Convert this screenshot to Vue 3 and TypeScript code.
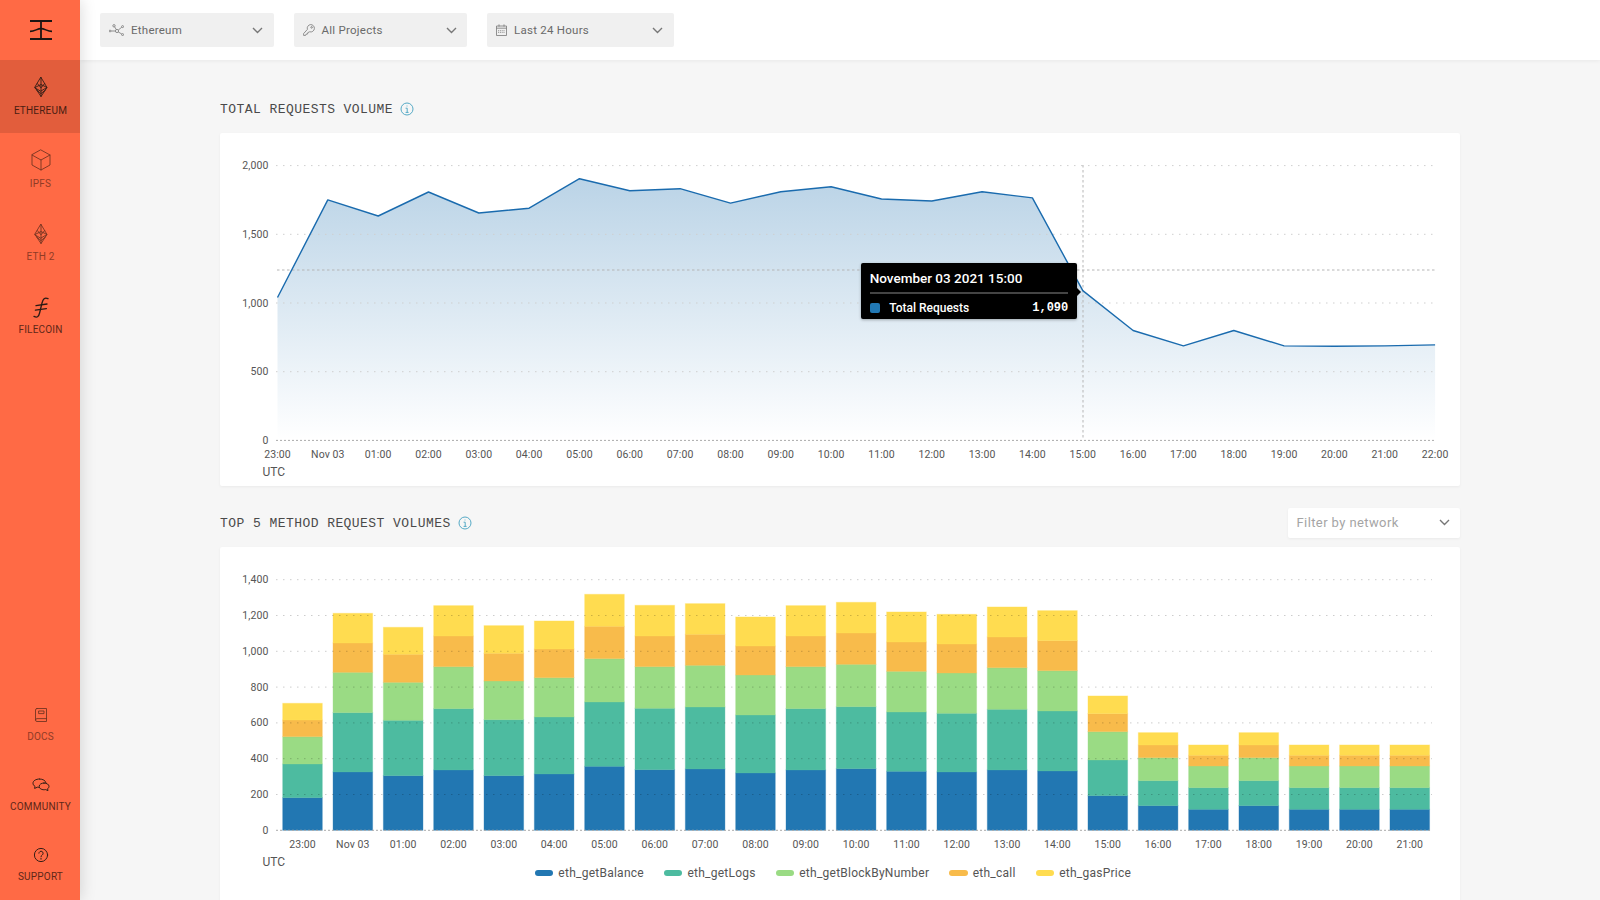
<script setup lang="ts">
const ethPaths = [
  'M12 2.5 L18 12.5 L12 21.5 L6 12.5 Z',
  'M6 12.5 L12 9.5 L18 12.5 L12 16 Z',
  'M12 2.5 V21.5',
  'M8.4 8.6 L12 12.8 L15.6 8.6',
  'M7.6 15 L12 18.6 L16.4 15',
]

interface NavItem { label: string; paths: string[]; wide?: boolean; active?: boolean; tone?: string }

const topNav: NavItem[] = [
  { label: 'Ethereum', paths: ethPaths, active: true, wide: false },
  { label: 'IPFS', paths: ['M12 2 L21 7 V17 L12 22 L3 17 V7 Z', 'M3 7 L12 12 L21 7', 'M12 12 V22'], tone: 'soft' },
  { label: 'ETH 2', paths: ethPaths, tone: 'soft' },
  { label: 'Filecoin', paths: ['M19 3.6 C15.6 2 14 4 13 8 L10.6 18 C9.6 22 8 23 5 21.4', 'M7 10.6 L18 9', 'M6.4 15.2 L17.4 13.6'], wide: true },
]

const bottomNav: NavItem[] = [
  { label: 'Docs', paths: ['M8 5.5 H17.5 V18.5 H8 A1.5 1.5 0 0 1 6.5 17 V7 A1.5 1.5 0 0 1 8 5.5 Z', 'M6.5 16.8 A1.5 1.5 0 0 1 8 15.6 H17.5', 'M10 8 H15 V10.6 H10 Z'], tone: 'soft' },
  { label: 'Community', paths: ['M10.5 6 C6.5 6 4 8 4 10.2 C4 11.6 4.8 12.6 6 13.4 L5.6 15.4 L8.4 14.2 C9 14.3 9.6 14.4 10.2 14.4', 'M10.5 6 C14 6 16.6 7.6 17 9.8', 'M15 10 C18 10 20 11.6 20 13.4 C20 14.4 19.4 15.2 18.6 15.8 L19 17.6 L16.6 16.6 C13.2 17.2 10.2 15.8 10.2 13.4 C10.2 11.4 12.4 10 15 10 Z'] },
  { label: 'Support', paths: ['M18.6 12 A6.6 6.6 0 1 1 5.4 12 A6.6 6.6 0 1 1 18.6 12 Z', 'M9.9 10.2 A2.1 2.1 0 1 1 13.2 12 C12.4 12.5 12 13 12 13.8', 'M12 15.4 V16.2'] },
]

const lineValues = [1040, 1750, 1633, 1808, 1655, 1690, 1905, 1817, 1832, 1727, 1810, 1846, 1757, 1742, 1810, 1765, 1090, 800, 688, 800, 688, 685, 688, 695]
const hours = ['23:00', 'Nov 03', '01:00', '02:00', '03:00', '04:00', '05:00', '06:00', '07:00', '08:00', '09:00', '10:00', '11:00', '12:00', '13:00', '14:00', '15:00', '16:00', '17:00', '18:00', '19:00', '20:00', '21:00', '22:00']

const lineX = (i: number) => 277.5 + i * 50.33
const lineY = (v: number) => 440.4 - v * 0.1374
const linePts = lineValues.map((v, i) => `${lineX(i).toFixed(1)},${lineY(v).toFixed(1)}`)
const linePath = 'M' + linePts.join(' L')
const areaPath = `${linePath} L${lineX(23)},440.4 L277.5,440.4 Z`
const lineTicks = [0, 500, 1000, 1500, 2000].map((v) => ({ y: lineY(v), label: v.toLocaleString('en-US') }))

const series = [
  { name: 'eth_getBalance', color: '#2277B2' },
  { name: 'eth_getLogs', color: '#4DBBA0' },
  { name: 'eth_getBlockByNumber', color: '#9ADB84' },
  { name: 'eth_call', color: '#F8BB4B' },
  { name: 'eth_gasPrice', color: '#FFDC50' },
]

// cumulative stack tops per hour, in thirds of a pixel above the axis
const low = [63, 128, 193, 225, 256]
const mid = [74, 149, 218, 256, 293]
const stacks = [
  [98, 199, 281, 331, 381], [175, 353, 474, 562, 651], [164, 330, 444, 528, 609], [181, 365, 491, 583, 674],
  [164, 332, 448, 531, 614], [169, 340, 458, 544, 628], [192, 385, 515, 612, 708], [182, 366, 491, 583, 675],
  [184, 370, 495, 588, 680], [172, 346, 466, 553, 640], [181, 365, 491, 583, 674], [185, 371, 498, 592, 684],
  [177, 355, 477, 565, 655], [175, 351, 472, 559, 648], [181, 363, 488, 580, 670], [178, 358, 479, 569, 659],
  [104, 211, 296, 350, 403], mid, low, mid, low, low, low,
]
const barBase = 830.3
const barWidth = 39.6
const barX = (i: number) => 282.7 + i * 50.33
const bars = stacks.flatMap((stack, i) =>
  stack.map((top, s) => {
    const prev = s === 0 ? 0 : stack[s - 1]
    return { key: `${i}-${s}`, x: barX(i), y: barBase - top / 3, h: (top - prev) / 3, color: series[s].color }
  }),
)
const barTicks = [0, 200, 400, 600, 800, 1000, 1200, 1400].map((v) => ({ y: barBase - (v / 200) * 35.8, label: v.toLocaleString('en-US') }))
</script>

<template>
  <div class="app">
    <aside class="sidebar">
      <div class="logo">
        <svg width="24" height="22" viewBox="0 0 24 22" class="logo-mark">
          <path d="M1 2 H23 M1 20 H23" stroke-width="2" />
          <path d="M1 12.4 C6 12.4 8 9.6 12 9.6 C16 9.6 18 12.4 23 12.4" stroke-width="1.6" />
          <path d="M12 2 V20" stroke-width="1.8" />
        </svg>
      </div>
      <nav class="nav">
        <a v-for="item in topNav" :key="item.label" class="nav-item" :class="{ active: item.active, soft: item.tone === 'soft' }">
          <svg width="24" height="24" viewBox="0 0 24 24" class="nav-icon" :class="{ thin: item.paths === ethPaths, bold: item.wide }">
            <path v-for="d in item.paths" :key="d" :d="d" />
          </svg>
          <span>{{ item.label }}</span>
        </a>
      </nav>
      <nav class="nav nav-bottom">
        <a v-for="item in bottomNav" :key="item.label" class="nav-item small" :class="{ soft: item.tone === 'soft' }">
          <svg width="24" height="24" viewBox="0 0 24 24" class="nav-icon">
            <path v-for="d in item.paths" :key="d" :d="d" />
          </svg>
          <span>{{ item.label }}</span>
        </a>
      </nav>
    </aside>

    <div class="main">
      <header class="topbar">
        <div class="select w173">
          <svg class="sel-icon" width="15" height="12" viewBox="0 0 15 12">
            <circle cx="1" cy="7" r="0.9" /><circle cx="5" cy="1.8" r="1.2" /><circle cx="8" cy="7" r="1.6" /><circle cx="13.6" cy="2.6" r="1" /><circle cx="13.6" cy="10.6" r="1" />
            <path d="M2 7 H6.4 M5.6 2.8 L7.3 5.6 M9.3 6 L12.8 3.2 M9.3 8 L12.8 10" />
          </svg>
          <span>Ethereum</span>
          <svg class="chev" width="11" height="7" viewBox="0 0 11 7"><path d="M1 1 L5.5 5.5 L10 1" /></svg>
        </div>
        <div class="select w173">
          <svg class="sel-icon key" width="12" height="12" viewBox="0 0 12 12">
            <path d="M7.6 0.6 A3.7 3.7 0 0 1 11.4 4.4 A3.7 3.7 0 0 1 6.6 7.8 L4.8 8.6 L4.6 10 L3 10.2 L2.6 11.4 L0.6 11.4 L0.6 9.6 L4.4 5.4 A3.7 3.7 0 0 1 7.6 0.6 Z" />
            <circle cx="8.6" cy="3.4" r="0.8" />
          </svg>
          <span>All Projects</span>
          <svg class="chev" width="11" height="7" viewBox="0 0 11 7"><path d="M1 1 L5.5 5.5 L10 1" /></svg>
        </div>
        <div class="select w186">
          <svg class="sel-icon cal" width="11" height="12" viewBox="0 0 11 12">
            <path d="M0.5 2 H10.5 V11.5 H0.5 Z M0.5 4.2 H10.5 M3 0.4 V2.6 M8 0.4 V2.6" />
            <path d="M2.6 6.2 V9.6 M4.4 6.2 V9.6 M6.2 6.2 V9.6 M8 6.2 V9.6" stroke-dasharray="1 0.7" />
          </svg>
          <span>Last 24 Hours</span>
          <svg class="chev" width="11" height="7" viewBox="0 0 11 7"><path d="M1 1 L5.5 5.5 L10 1" /></svg>
        </div>
      </header>

      <main class="content">
        <div class="section-head">
          <h2>TOTAL REQUESTS VOLUME</h2>
          <svg class="info" width="14" height="14" viewBox="0 0 14 14">
            <circle cx="7" cy="7" r="6" /><path d="M5.6 6.2 H7.2 V10.4 M5.6 10.4 H8.6 M7 3.6 V4.4" />
          </svg>
        </div>

        <section class="card card-line">
          <svg class="chart" width="1240" height="353" viewBox="220 133 1240 353">
            <defs>
              <linearGradient id="areaFill" gradientUnits="userSpaceOnUse" x1="0" y1="178" x2="0" y2="440">
                <stop offset="0" stop-color="#2172B0" stop-opacity="0.31" />
                <stop offset="1" stop-color="#2172B0" stop-opacity="0" />
              </linearGradient>
            </defs>
            <path :d="areaPath" fill="url(#areaFill)" />
            <template v-for="t in lineTicks" :key="t.label">
              <line class="grid" :class="{ axis: t.label === '0' }" x1="276" :y1="t.y" x2="1435" :y2="t.y" />
              <text class="tick" x="268.5" :y="t.y + 3.6" text-anchor="end">{{ t.label }}</text>
            </template>
            <line class="cross" x1="277" y1="270" x2="1435" y2="270" />
            <line class="cross" x1="1083" y1="165" x2="1083" y2="440" />
            <path :d="linePath" class="series-line" />
            <text v-for="(h, i) in hours" :key="h" class="tick" :x="lineX(i)" y="458" text-anchor="middle">{{ h }}</text>
            <text class="utc" x="262.5" y="476">UTC</text>
          </svg>
          <div class="tooltip">
            <div class="tip-title">November 03 2021 15:00</div>
            <div class="tip-row">
              <i class="tip-swatch"></i>
              <span class="tip-name">Total Requests</span>
              <b class="tip-value">1,090</b>
            </div>
          </div>
        </section>

        <div class="section-head second">
          <h2>TOP 5 METHOD REQUEST VOLUMES</h2>
          <svg class="info" width="14" height="14" viewBox="0 0 14 14">
            <circle cx="7" cy="7" r="6" /><path d="M5.6 6.2 H7.2 V10.4 M5.6 10.4 H8.6 M7 3.6 V4.4" />
          </svg>
          <div class="filter">
            <span>Filter by network</span>
            <svg class="chev" width="11" height="7" viewBox="0 0 11 7"><path d="M1 1 L5.5 5.5 L10 1" /></svg>
          </div>
        </div>

        <section class="card card-bars">
          <svg class="chart" width="1240" height="326" viewBox="220 547 1240 326">
            <rect v-for="b in bars" :key="b.key" class="bar" :x="b.x" :y="b.y" :width="barWidth" :height="b.h" :fill="b.color" :stroke="b.color" />
            <template v-for="t in barTicks" :key="t.label">
              <line class="grid over" :class="{ axis: t.label === '0' }" x1="276" :y1="t.y" x2="1432" :y2="t.y" />
              <text class="tick" x="268.5" :y="t.y + 3.4" text-anchor="end">{{ t.label }}</text>
            </template>
            <text v-for="(h, i) in hours.slice(0, 23)" :key="h" class="tick" :x="barX(i) + 19.8" y="848" text-anchor="middle">{{ h }}</text>
            <text class="utc" x="262.5" y="866">UTC</text>
          </svg>
          <div class="legend">
            <div v-for="s in series" :key="s.name" class="legend-item">
              <i :style="{ background: s.color }"></i>{{ s.name }}
            </div>
          </div>
        </section>
      </main>
    </div>
  </div>
</template>

<style>
html, body { margin: 0; height: 100%; overflow: hidden; }
</style>

<style scoped>
.app {
  display: flex;
  width: 1600px;
  height: 900px;
  overflow: hidden;
  background: #f6f6f6;
  font-family: Roboto, "Liberation Sans", sans-serif;
}
.sidebar {
  position: relative;
  z-index: 2;
  flex: 0 0 80px;
  display: flex;
  flex-direction: column;
  background: #ff6a45;
  box-shadow: 2px 0 14px rgba(0, 0, 0, 0.13);
}
.logo {
  height: 60px;
  display: flex;
  align-items: center;
  justify-content: center;
  padding-left: 1px;
}
.logo-mark { fill: none; stroke: #1c1512; }
.nav { display: flex; flex-direction: column; }
.nav-bottom { margin-top: auto; gap: 3px; }
.nav-item {
  height: 73.33px;
  box-sizing: border-box;
  padding: 15px 0 0 1px;
  display: flex;
  flex-direction: column;
  align-items: center;
  gap: 4.5px;
  font-size: 10px;
  line-height: 14px;
  letter-spacing: 0.2px;
  text-transform: uppercase;
  color: #5e2718;
}
.nav-item.soft { color: #8f3b25; }
.nav-item.active { background: #e25d3c; color: #4a1e12; }
.nav-item.small { height: 67px; padding-top: 10px; gap: 3px; }
.nav-icon { fill: none; stroke: #2a1a14; stroke-width: 0.95; stroke-linejoin: round; stroke-linecap: round; }
.nav-icon.thin { stroke-width: 0.85; }
.nav-icon.bold { stroke-width: 1.3; }
.nav-item.soft .nav-icon { stroke: #6e3120; stroke-width: 0.85; }

.main { flex: 1; min-width: 0; display: flex; flex-direction: column; }
.topbar {
  position: relative;
  z-index: 1;
  flex: 0 0 60px;
  box-sizing: border-box;
  display: flex;
  align-items: center;
  gap: 20px;
  padding-left: 20px;
  background: #fff;
  box-shadow: 0 1px 4px rgba(0, 0, 0, 0.06);
}
.select {
  height: 33.5px;
  box-sizing: border-box;
  display: flex;
  align-items: center;
  gap: 7px;
  padding: 0 10.5px 0 9px;
  background: #f0f0f0;
  border-radius: 2px;
  color: #6a6a6a;
  font-size: 11.5px;
  letter-spacing: 0.25px;
}
.w173 { width: 173.5px; }
.w186 { width: 186.5px; }
.select .chev { margin-left: auto; }
.sel-icon { flex: none; fill: none; stroke: #777; stroke-width: 0.8; }
.chev { flex: none; fill: none; stroke: #777; stroke-width: 1.4; }

.content { flex: 1; padding: 34px 140px 0; }
.section-head {
  height: 30px;
  margin-bottom: 9px;
  display: flex;
  align-items: center;
  gap: 7px;
}
.section-head.second { margin-top: 22px; }
.section-head h2 {
  margin: 0;
  font-family: "Liberation Mono", "DejaVu Sans Mono", monospace;
  font-size: 13px;
  font-weight: 400;
  letter-spacing: 0.44px;
  color: #4a4a4a;
}
.info { fill: none; stroke: #56aac6; stroke-width: 1; }
.filter {
  margin-left: auto;
  width: 172.5px;
  height: 30px;
  box-sizing: border-box;
  display: flex;
  align-items: center;
  justify-content: space-between;
  padding: 0 10px 2px 9px;
  background: #fff;
  border-radius: 2px;
  box-shadow: 0 1px 3px rgba(0, 0, 0, 0.05);
  color: #a5a5a5;
  font-size: 13px;
  letter-spacing: 0.4px;
}
.card {
  position: relative;
  background: #fff;
  border-radius: 2px;
  box-shadow: 0 1px 3px rgba(0, 0, 0, 0.05);
}
.card-line { height: 353px; }
.card-bars { height: 370px; }
.chart { display: block; }
.grid { stroke: #cfcfcf; stroke-width: 1; stroke-dasharray: 1.5 5.5; }
.grid.over { stroke: rgba(0, 0, 0, 0.2); }
.grid.axis { stroke: #aaa; stroke-dasharray: 2 2; }
.cross { stroke: #b5b5b5; stroke-width: 1; stroke-dasharray: 2.5 2.5; }
.series-line { fill: none; stroke: #1a6bae; stroke-width: 1.4; stroke-linejoin: round; }
.bar { stroke-width: 1; stroke-opacity: 0.35; }
.tick { font-size: 10.5px; fill: #555; letter-spacing: 0.1px; }
.utc { font-size: 12px; fill: #555; }

.tooltip {
  position: absolute;
  left: 640.7px;
  top: 130.3px;
  width: 216.6px;
  height: 55.7px;
  box-sizing: border-box;
  padding: 0 9px;
  background: #000;
  border-radius: 2px;
  color: #fff;
  box-shadow: 0 1px 3px rgba(0, 0, 0, 0.3);
}
.tooltip::after {
  content: "";
  position: absolute;
  right: -4px;
  top: 25px;
  border-left: 4px solid #000;
  border-top: 4px solid transparent;
  border-bottom: 4px solid transparent;
}
.tip-title {
  height: 29px;
  line-height: 30px;
  font-size: 13.5px;
  font-weight: 500;
  border-bottom: 2px solid #444;
  box-sizing: content-box;
}
.tip-row {
  display: flex;
  align-items: center;
  height: 27px;
  font-size: 12px;
}
.tip-swatch {
  width: 10.5px;
  height: 10px;
  margin-right: 9px;
  border-radius: 2px;
  background: #2178b4;
}
.tip-name { font-weight: 500; }
.tip-value {
  margin-left: auto;
  font-family: "Liberation Mono", monospace;
  font-size: 12px;
  font-weight: 700;
}
.legend {
  display: flex;
  justify-content: center;
  gap: 20px;
  margin-top: -7px;
  padding-right: 14px;
  line-height: 14px;
  font-size: 12px;
  letter-spacing: 0.25px;
  color: #555;
}
.legend-item { display: flex; align-items: center; gap: 5px; }
.legend-item i { width: 18.5px; height: 6px; border-radius: 3px; }
</style>
